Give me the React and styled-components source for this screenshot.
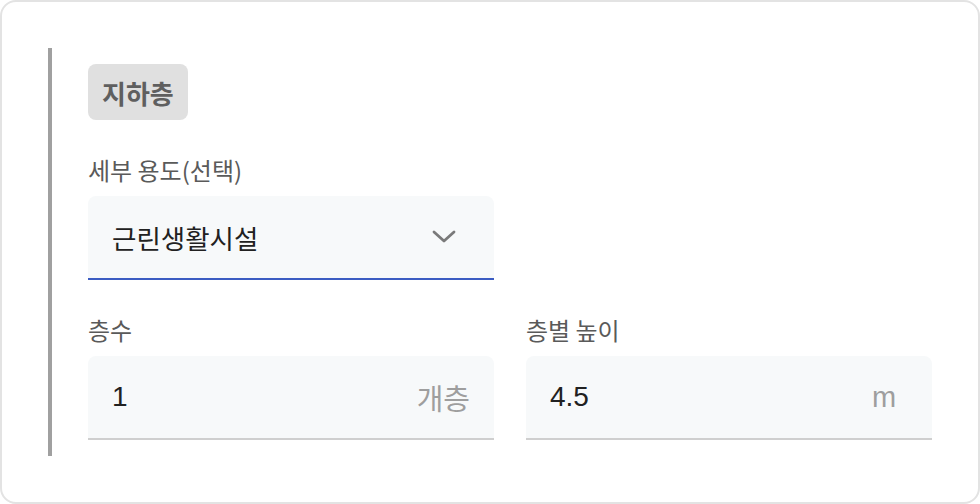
import React from "react";
import styled, { createGlobalStyle } from "styled-components";

const Global = createGlobalStyle`
  html, body { margin: 0; padding: 0; background: #ffffff; }
  body { font-family: "Noto Sans CJK KR", "Noto Sans", sans-serif; }
  * { box-sizing: border-box; }
`;

const Card = styled.div`
  width: 980px;
  height: 504px;
  border: 2px solid #e3e3e3;
  border-radius: 16px;
  padding: 46px;
  background: #fff;
`;

const Section = styled.section`
  border-left: 4px solid #a0a0a0;
  padding: 16px 0 16px 36px;
  display: flex;
  flex-direction: column;
  align-items: flex-start;
`;

const Badge = styled.span`
  display: inline-flex;
  align-items: center;
  height: 56px;
  padding: 0 14px;
  border-radius: 8px;
  background: #e0e0e0;
  color: #5f5f5f;
  font-size: 26px;
  font-weight: 700;
  margin-bottom: 36px;
`;

const Row = styled.div`
  display: grid;
  grid-template-columns: 1fr 1fr;
  column-gap: 32px;
  width: 100%;
  margin-top: ${(p) => p.$mt || 0}px;
`;

const Field = styled.div`
  display: flex;
  flex-direction: column;
  gap: 12px;
`;

const Label = styled.label`
  font-size: 24px;
  line-height: 28px;
  font-weight: 400;
  color: #5a5a5a;
  font-family: "Noto Sans CJK KR", sans-serif;
`;

const Box = styled.div`
  height: 84px;
  display: flex;
  align-items: center;
  padding: 0 24px;
  background: #f7f9fa;
  border-radius: 8px 8px 0 0;
  border-bottom: 2px solid ${(p) => (p.$active ? "#3b5cc2" : "#cfcfcf")};
`;

const SelectText = styled.span`
  flex: 1;
  font-size: 26.5px;
  color: #212121;
  font-family: "Noto Sans CJK KR", sans-serif;
`;

const Chevron = styled.svg`
  width: 24px;
  height: 14px;
  margin-right: 14px;
`;

const Value = styled.span`
  flex: 1;
  font-size: 28px;
  color: #212121;
  font-family: "Liberation Sans", Arial, sans-serif;
`;

const Suffix = styled.span`
  min-width: 36px;
  font-size: 29px;
  color: #9e9e9e;
  font-family: "Liberation Sans", "Noto Sans CJK KR", sans-serif;
`;

export default function App() {
  return (
    <>
      <Global />
      <Card>
        <Section>
          <Badge>지하층</Badge>
          <Row>
            <Field>
              <Label>세부 용도(선택)</Label>
              <Box $active>
                <SelectText>근린생활시설</SelectText>
                <Chevron viewBox="0 0 24 14" fill="none">
                  <path d="M2 2 L12 11 L22 2" stroke="#7a7a7a" strokeWidth="2.8" strokeLinecap="round" strokeLinejoin="round" />
                </Chevron>
              </Box>
            </Field>
          </Row>
          <Row $mt={36}>
            <Field>
              <Label>층수</Label>
              <Box>
                <Value>1</Value>
                <Suffix>개층</Suffix>
              </Box>
            </Field>
            <Field>
              <Label>층별 높이</Label>
              <Box>
                <Value>4.5</Value>
                <Suffix>m</Suffix>
              </Box>
            </Field>
          </Row>
        </Section>
      </Card>
    </>
  );
}
